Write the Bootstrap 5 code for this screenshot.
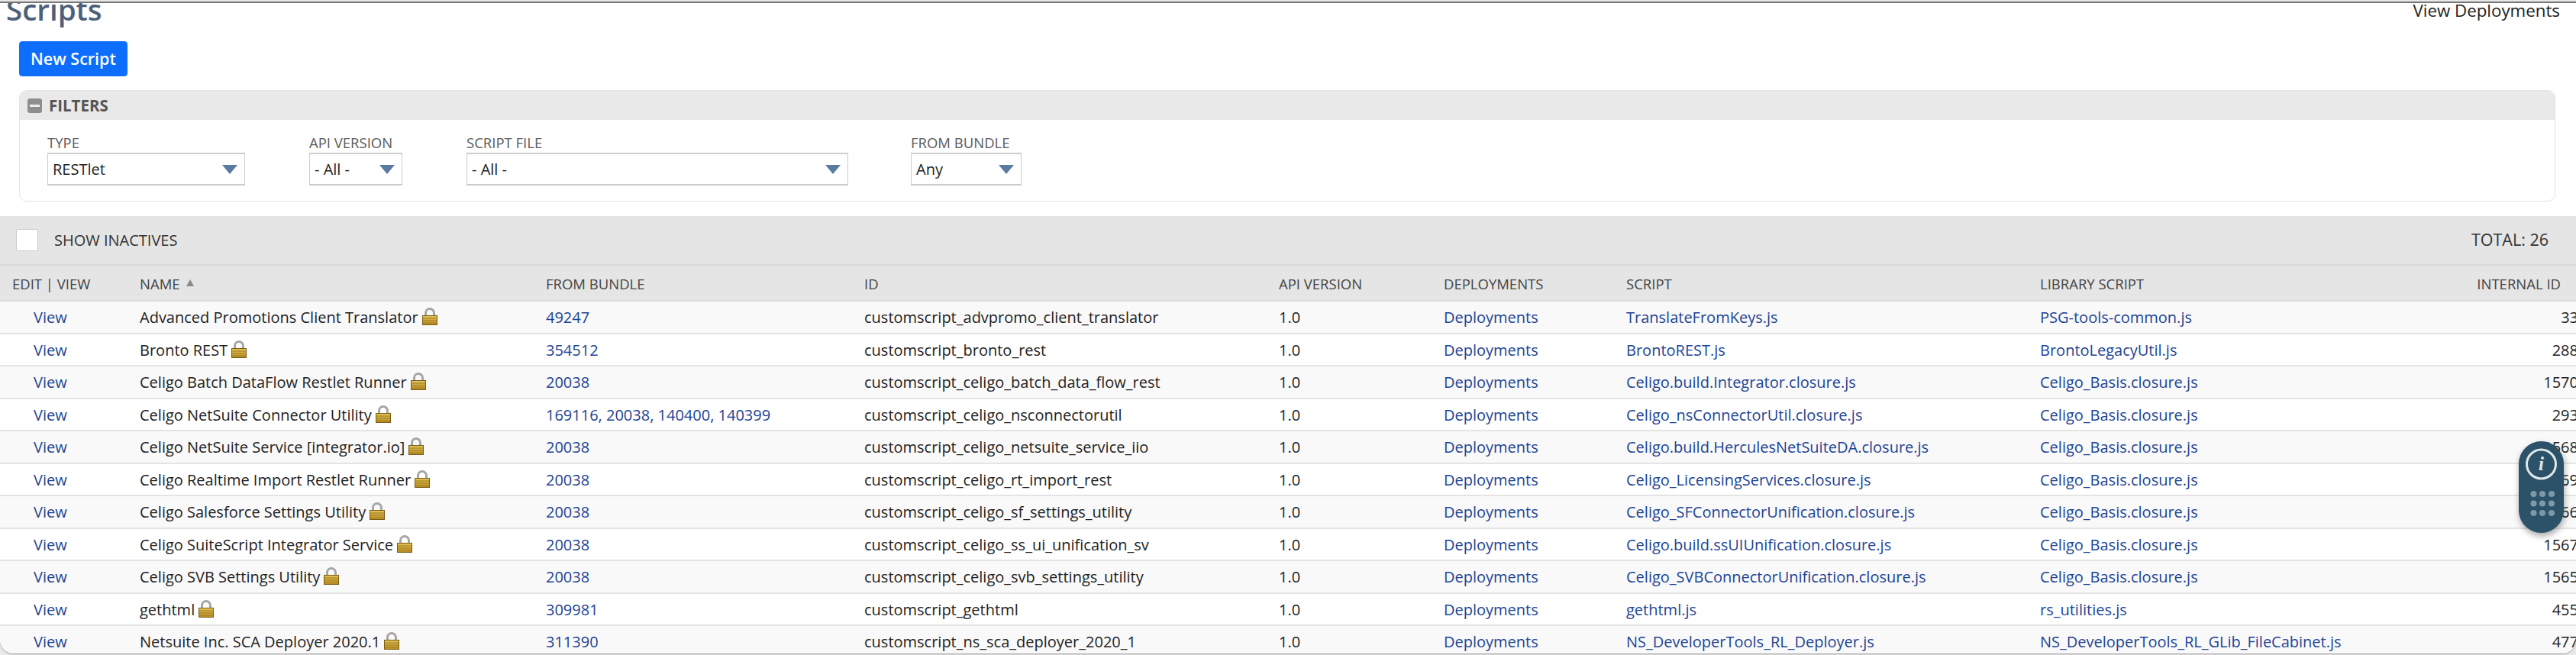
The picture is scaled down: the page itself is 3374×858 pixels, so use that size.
<!DOCTYPE html>
<html lang="en">
<head>
<meta charset="utf-8">
<title>Scripts</title>
<link href="https://cdn.jsdelivr.net/npm/bootstrap@5.3.0/dist/css/bootstrap.min.css" rel="stylesheet">
<style>
html,body{height:100%;overflow:hidden;}
body{background:#e9e9e9;font-family:"Open Sans","Liberation Sans",sans-serif;font-size:20px;color:#222;}
.page-frame{height:854px;width:3374px;overflow:hidden;background:#fff;border-top:2px solid #777;margin-top:2px;border-radius:0 0 18px 18px;box-shadow:0 1px 2px rgba(0,0,0,.35);position:relative;}
.title-bar{height:50px;overflow:hidden;padding-left:8px;padding-right:21px;}
.page-title{font-size:38.500px;font-weight:600;color:#4d5f79;line-height:52px;margin:-18px 0 0 0;}
.page-action{font-size:22.300px;font-weight:500;color:#222;line-height:30px;margin-top:-5px;}
.btn-new{margin-left:25px;width:142px;height:46px;padding:0;font-size:21.500px;font-weight:600;border-radius:4px;line-height:44px;}
.filter-card{margin:18px 27px 0 25px;height:146px;border:1px solid #e3e3e3;border-radius:10px;overflow:hidden;}
.filter-head{height:38px;background:#e9e9e9;padding-left:10px;font-size:20.500px;font-weight:700;color:#555;gap:9px;}
.minus-box{width:19px;height:19px;background:#8e8e8e;border-radius:3px;}
.minus-box::before{content:"";width:13px;height:3px;background:#eee;}
.filter-body{padding:19px 0 0 36px;}
.filter-field{margin-right:84px;}
.filter-field-last{margin-right:82px;}
.filter-label{font-size:18.500px;color:#5a5a5a;line-height:22px;margin-bottom:2px;display:block;}
.filter-select{height:43px;border:1px solid #ccc;border-top-width:2px;border-bottom-width:2px;border-radius:0;padding:0 24px 0 6px;font-family:inherit;font-size:20px;color:#222;background-image:url("data:image/svg+xml,%3Csvg xmlns='http://www.w3.org/2000/svg' viewBox='0 0 20 12'%3E%3Cpath d='M0 0h20l-10 12z' fill='%235a7a9f'/%3E%3C/svg%3E");background-size:20px 12px;background-position:right 9px center;line-height:1.2;}
.w-type{width:259px;}.w-api{width:122px;}.w-file{width:500px;}.w-bundle{width:145px;}
.list-toolbar{margin-top:19px;height:65px;background:#e5e5e5;padding:0 36px 0 21px;font-size:20px;color:#333;border-bottom:2px solid #d9d9d9;}
.total-text{font-size:21.500px;}
.show-box{width:29px;height:29px;background:#fff;border:1px solid #ccc;border-radius:2px;margin-right:21px;}
.script-table{width:3377px;table-layout:fixed;margin:0;--bs-table-striped-bg:#f9f9f9;--bs-table-color:#222;--bs-table-striped-color:#222;border-color:#dedede;font-size:20px;}
.script-table th{height:46px;padding:2px 0 0 0;background:#e5e5e5;font-size:18.500px;font-weight:400;color:#444;vertical-align:middle;border-bottom:2px solid #dcdcdc;}
.script-table td{height:42.500px;padding:2px 0 0 0;vertical-align:middle;border-bottom:2px solid #e4e4e4;white-space:nowrap;}
.script-table a{color:#1d4494;text-decoration:none;}
.c1{width:183px;}.c2{width:532px;}.c3{width:417px;}.c4{width:543px;}.c5{width:216px;}.c6{width:239px;}.c7{width:542px;}.c8{width:405px;}.c9{width:300px;}
.script-table th.edit-head{padding-left:16px;}
.script-table td.view-cell{padding-left:44px;}
.script-table th.id-head{padding-right:23px;}
.sort-up{width:0;height:0;border-left:5px solid transparent;border-right:5px solid transparent;border-bottom:9px solid #888;display:inline-block;margin:0 0 4px 8px;}
.lock-icon{width:20px;height:23px;margin:-6px 0 0 5px;vertical-align:middle;}
.float-widget{position:absolute;left:3299px;top:574px;width:59px;height:120px;border-radius:30px;background:#2b5268;box-shadow:1px 4px 8px rgba(0,0,0,.35);}
</style>
</head>
<body>
<svg width="0" height="0" class="d-block" aria-hidden="true"><defs>
<linearGradient id="gold" x1="0" y1="0" x2="0" y2="1"><stop offset="0" stop-color="#e3c65c"/><stop offset="1" stop-color="#b88d22"/></linearGradient>
<symbol id="lock" viewBox="0 0 20 23">
<path d="M4.500 11V7a5.500 5.500 0 0 1 11 0v4" fill="none" stroke="#a6a6a6" stroke-width="3"/>
<rect x=".5" y="10.500" width="19" height="12" fill="url(#gold)" stroke="#7c5c14"/>
<path d="M1 14h18M1 17h18M1 20h18" stroke="#a27c1c" stroke-width="1"/>
</symbol></defs></svg>
<div class="page-frame">
  <div class="title-bar d-flex justify-content-between align-items-start">
    <h1 class="page-title">Scripts</h1>
    <div class="page-action">View Deployments</div>
  </div>
  <button type="button" class="btn btn-primary btn-new d-block">New Script</button>
  <div class="filter-card">
    <div class="filter-head d-flex align-items-center">
      <span class="minus-box d-flex align-items-center justify-content-center"></span>
      <span>FILTERS</span>
    </div>
    <div class="filter-body d-flex">
      <div class="filter-field"><label class="filter-label">TYPE</label><select class="form-select filter-select w-type"><option>RESTlet</option></select></div>
      <div class="filter-field"><label class="filter-label">API VERSION</label><select class="form-select filter-select w-api"><option>- All -</option></select></div>
      <div class="filter-field-last"><label class="filter-label">SCRIPT FILE</label><select class="form-select filter-select w-file"><option>- All -</option></select></div>
      <div><label class="filter-label">FROM BUNDLE</label><select class="form-select filter-select w-bundle"><option>Any</option></select></div>
    </div>
  </div>
  <div class="list-toolbar d-flex align-items-center">
    <span class="show-box"></span><span>SHOW INACTIVES</span>
    <span class="ms-auto total-text">TOTAL: 26</span>
  </div>
  <table class="table table-striped script-table">
    <colgroup><col class="c1"><col class="c2"><col class="c3"><col class="c4"><col class="c5"><col class="c6"><col class="c7"><col class="c8"><col class="c9"></colgroup>
    <thead><tr>
      <th class="edit-head">EDIT | VIEW</th>
      <th>NAME<span class="sort-up"></span></th>
      <th>FROM BUNDLE</th><th>ID</th><th>API VERSION</th><th>DEPLOYMENTS</th><th>SCRIPT</th><th>LIBRARY SCRIPT</th>
      <th class="text-end id-head">INTERNAL ID</th>
    </tr></thead>
    <tbody>
      <tr><td class="view-cell"><a href="#">View</a></td><td>Advanced Promotions Client Translator<svg class="lock-icon"><use href="#lock"/></svg></td><td><a href="#">49247</a></td><td>customscript_advpromo_client_translator</td><td>1.0</td><td><a href="#">Deployments</a></td><td><a href="#">TranslateFromKeys.js</a></td><td><a href="#">PSG-tools-common.js</a></td><td class="text-end">33</td></tr>
      <tr><td class="view-cell"><a href="#">View</a></td><td>Bronto REST<svg class="lock-icon"><use href="#lock"/></svg></td><td><a href="#">354512</a></td><td>customscript_bronto_rest</td><td>1.0</td><td><a href="#">Deployments</a></td><td><a href="#">BrontoREST.js</a></td><td><a href="#">BrontoLegacyUtil.js</a></td><td class="text-end">288</td></tr>
      <tr><td class="view-cell"><a href="#">View</a></td><td>Celigo Batch DataFlow Restlet Runner<svg class="lock-icon"><use href="#lock"/></svg></td><td><a href="#">20038</a></td><td>customscript_celigo_batch_data_flow_rest</td><td>1.0</td><td><a href="#">Deployments</a></td><td><a href="#">Celigo.build.Integrator.closure.js</a></td><td><a href="#">Celigo_Basis.closure.js</a></td><td class="text-end">1570</td></tr>
      <tr><td class="view-cell"><a href="#">View</a></td><td>Celigo NetSuite Connector Utility<svg class="lock-icon"><use href="#lock"/></svg></td><td><a href="#">169116, 20038, 140400, 140399</a></td><td>customscript_celigo_nsconnectorutil</td><td>1.0</td><td><a href="#">Deployments</a></td><td><a href="#">Celigo_nsConnectorUtil.closure.js</a></td><td><a href="#">Celigo_Basis.closure.js</a></td><td class="text-end">293</td></tr>
      <tr><td class="view-cell"><a href="#">View</a></td><td>Celigo NetSuite Service [integrator.io]<svg class="lock-icon"><use href="#lock"/></svg></td><td><a href="#">20038</a></td><td>customscript_celigo_netsuite_service_iio</td><td>1.0</td><td><a href="#">Deployments</a></td><td><a href="#">Celigo.build.HerculesNetSuiteDA.closure.js</a></td><td><a href="#">Celigo_Basis.closure.js</a></td><td class="text-end">1568</td></tr>
      <tr><td class="view-cell"><a href="#">View</a></td><td>Celigo Realtime Import Restlet Runner<svg class="lock-icon"><use href="#lock"/></svg></td><td><a href="#">20038</a></td><td>customscript_celigo_rt_import_rest</td><td>1.0</td><td><a href="#">Deployments</a></td><td><a href="#">Celigo_LicensingServices.closure.js</a></td><td><a href="#">Celigo_Basis.closure.js</a></td><td class="text-end">1569</td></tr>
      <tr><td class="view-cell"><a href="#">View</a></td><td>Celigo Salesforce Settings Utility<svg class="lock-icon"><use href="#lock"/></svg></td><td><a href="#">20038</a></td><td>customscript_celigo_sf_settings_utility</td><td>1.0</td><td><a href="#">Deployments</a></td><td><a href="#">Celigo_SFConnectorUnification.closure.js</a></td><td><a href="#">Celigo_Basis.closure.js</a></td><td class="text-end">1566</td></tr>
      <tr><td class="view-cell"><a href="#">View</a></td><td>Celigo SuiteScript Integrator Service<svg class="lock-icon"><use href="#lock"/></svg></td><td><a href="#">20038</a></td><td>customscript_celigo_ss_ui_unification_sv</td><td>1.0</td><td><a href="#">Deployments</a></td><td><a href="#">Celigo.build.ssUIUnification.closure.js</a></td><td><a href="#">Celigo_Basis.closure.js</a></td><td class="text-end">1567</td></tr>
      <tr><td class="view-cell"><a href="#">View</a></td><td>Celigo SVB Settings Utility<svg class="lock-icon"><use href="#lock"/></svg></td><td><a href="#">20038</a></td><td>customscript_celigo_svb_settings_utility</td><td>1.0</td><td><a href="#">Deployments</a></td><td><a href="#">Celigo_SVBConnectorUnification.closure.js</a></td><td><a href="#">Celigo_Basis.closure.js</a></td><td class="text-end">1565</td></tr>
      <tr><td class="view-cell"><a href="#">View</a></td><td>gethtml<svg class="lock-icon"><use href="#lock"/></svg></td><td><a href="#">309981</a></td><td>customscript_gethtml</td><td>1.0</td><td><a href="#">Deployments</a></td><td><a href="#">gethtml.js</a></td><td><a href="#">rs_utilities.js</a></td><td class="text-end">455</td></tr>
      <tr><td class="view-cell"><a href="#">View</a></td><td>Netsuite Inc. SCA Deployer 2020.1<svg class="lock-icon"><use href="#lock"/></svg></td><td><a href="#">311390</a></td><td>customscript_ns_sca_deployer_2020_1</td><td>1.0</td><td><a href="#">Deployments</a></td><td><a href="#">NS_DeveloperTools_RL_Deployer.js</a></td><td><a href="#">NS_DeveloperTools_RL_GLib_FileCabinet.js</a></td><td class="text-end">477</td></tr>
    </tbody>
  </table>
  <div class="float-widget">
    <svg viewBox="0 0 59 120" width="59" height="120" aria-hidden="true">
      <circle cx="29.500" cy="30" r="19" fill="none" stroke="#dfe7ea" stroke-width="3"/>
      <text x="29.500" y="38" text-anchor="middle" font-family="Liberation Serif, serif" font-style="italic" font-weight="700" font-size="25" fill="#dfe7ea">i</text>
      <g fill="#7f98a5"><circle cx="19.500" cy="69" r="4"/><circle cx="31" cy="69" r="4"/><circle cx="43" cy="69" r="4"/><circle cx="19.500" cy="81.500" r="4"/><circle cx="31" cy="81.500" r="4"/><circle cx="43" cy="81.500" r="4"/><circle cx="19.500" cy="94" r="4"/><circle cx="31" cy="94" r="4"/><circle cx="43" cy="94" r="4"/></g>
    </svg>
  </div>
</div>
<script src="https://cdn.jsdelivr.net/npm/bootstrap@5.3.0/dist/js/bootstrap.bundle.min.js"></script>
</body>
</html>
